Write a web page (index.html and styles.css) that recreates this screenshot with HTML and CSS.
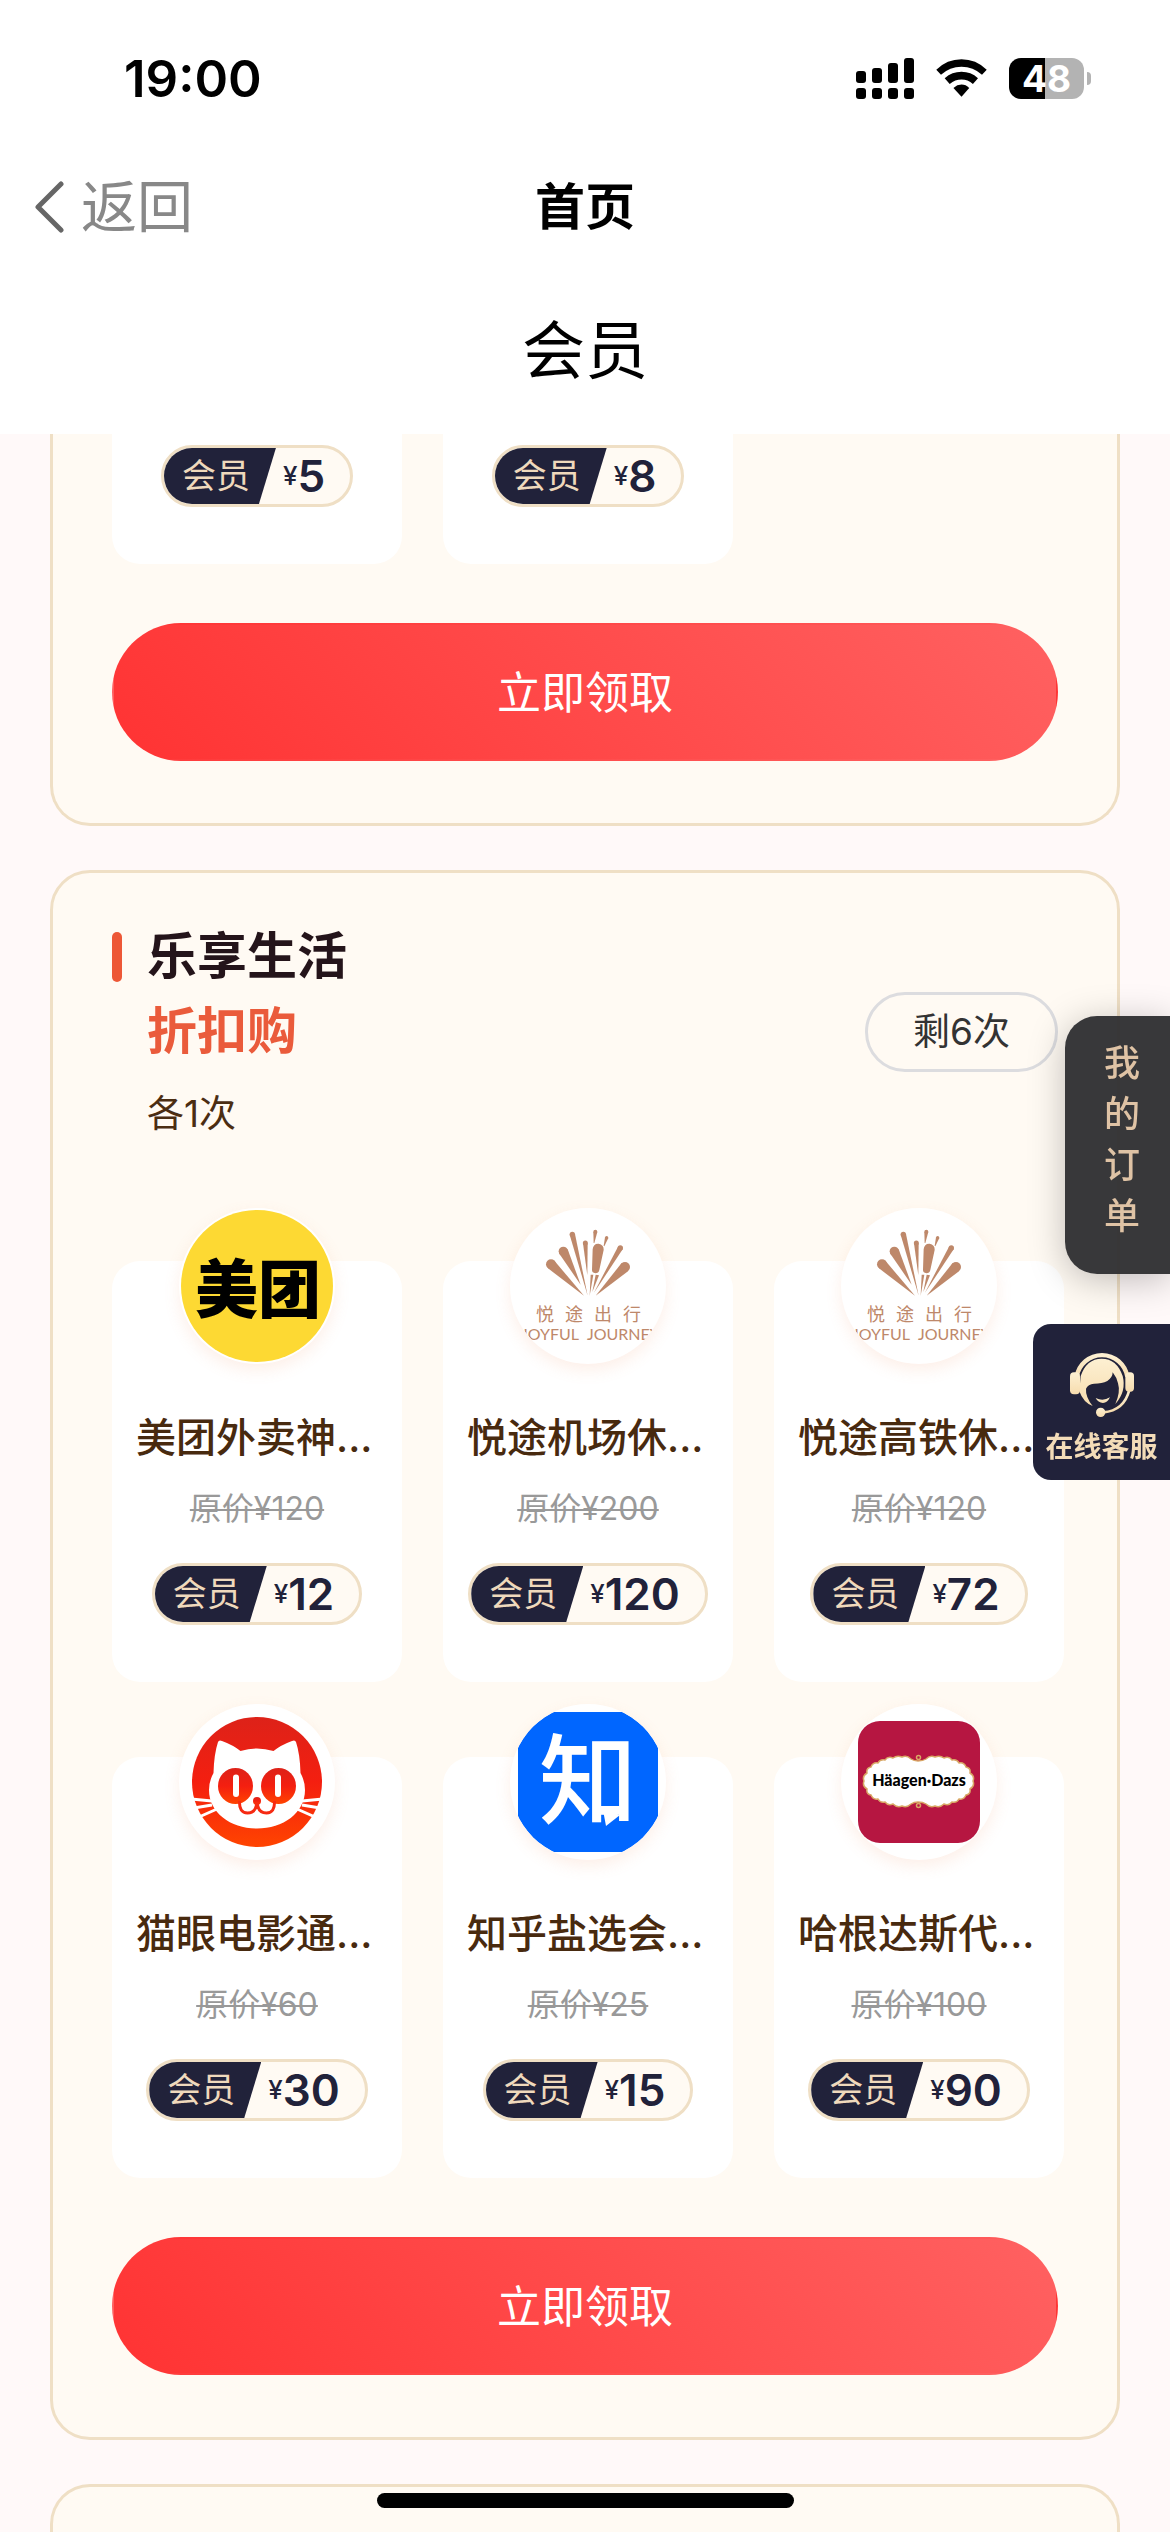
FILE: index.html
```html
<!DOCTYPE html>
<html lang="zh-CN">
<head>
<meta charset="utf-8">
<meta name="viewport" content="width=device-width, initial-scale=1">
<title>会员</title>
<link rel="stylesheet" href="styles.css">
</head>
<body>
<svg class="defs" aria-hidden="true">
  <defs>
    <clipPath id="disc"><circle cx="78" cy="78" r="78"/></clipPath>
    <linearGradient id="catRed" x1="0" y1="0" x2="0" y2="1">
      <stop offset="0" stop-color="#dd2219"/><stop offset=".5" stop-color="#f41f10"/><stop offset="1" stop-color="#ff4400"/>
    </linearGradient>
    <linearGradient id="cream" x1="0" y1="0" x2="0" y2="1">
      <stop offset="0" stop-color="#fdf0d2"/><stop offset="1" stop-color="#f6dcae"/>
    </linearGradient>
    <symbol id="joyful" viewBox="0 0 156 156">
      <g fill="#be886a" transform="scale(.3333) translate(-60 -54)">
        <circle cx="183" cy="223" r="15"/><path d="M174 235 L192 211 L282 317Z"/>
        <circle cx="220" cy="184" r="14"/><path d="M207 190 L233 178 L272 284Z"/>
        <circle cx="247" cy="133" r="8"/><path d="M239 134 L255 132 L293 317Z"/>
        <circle cx="286" cy="159" r="7.500"/><path d="M279 160 L293 160 L292 256Z"/>
        <path d="M308 178 Q310 160 326 161 Q342 164 341 180 L328 240 Q326 250 316 250 Q306 248 306 240Z"/>
        <circle cx="316" cy="125" r="6"/><path d="M310 126 L322 126 L313 159 L311 159Z"/>
        <circle cx="350" cy="143" r="5"/><path d="M345 142 L355 144 L343 169 L341 168Z"/>
        <circle cx="391" cy="174" r="8"/><path d="M384 170 L398 178 L312 308Z"/>
        <circle cx="405" cy="231" r="15"/><path d="M395 219 L414 244 L317 317Z"/>
        <path d="M302 254 L310 254 L299 317Z"/><path d="M317 254 L327 256 L307 306Z"/>
      </g>
      <g class="joy-name"><text x="26" y="113">悦</text><text x="55" y="113">途</text><text x="84" y="113">出</text><text x="113" y="113">行</text></g>
      <g class="joy-latin" clip-path="url(#disc)"><text x="11" y="132">JOYFUL</text><text x="77" y="132">JOURNEY</text></g>
    </symbol>
  </defs>
</svg>

<header class="header">
  <div class="status">
    <time class="clock">19:00</time>
    <div class="status-icons">
      <svg class="signal" viewBox="0 0 58 41" aria-hidden="true">
        <rect x="0" y="13" width="10" height="12" rx="3"/><rect x="16" y="10" width="10" height="15" rx="3"/><rect x="32" y="5" width="10" height="20" rx="3"/><rect x="48" y="0" width="10" height="25" rx="3"/>
        <rect x="0" y="30" width="10" height="11" rx="3"/><rect x="16" y="30" width="10" height="11" rx="3"/><rect x="32" y="30" width="10" height="11" rx="3"/><rect x="48" y="30" width="10" height="11" rx="3"/>
      </svg>
      <svg class="wifi" viewBox="290 56 150 113" aria-hidden="true">
        <path d="M290 88 Q322 57 365 57 Q408 57 440 88 L426 103 Q400 79 365 79 Q330 79 304 103Z"/>
        <path d="M315 113 Q337 94 365 94 Q393 94 414 113 L399 130 Q384 117 365 117 Q346 117 330 130Z"/>
        <path d="M341 142 Q352 132 365 132 Q378 132 388 142 L365 168Z"/>
      </svg>
      <div class="battery">48</div>
    </div>
  </div>
  <nav class="nav">
    <a class="back" href="#">
      <svg class="chevron" viewBox="0 0 29 52" aria-hidden="true"><path d="M26 3 L3 26 L26 49"/></svg>
      返回
    </a>
    <div class="nav-title">首页</div>
  </nav>
  <h1 class="page-title">会员</h1>
</header>

<main class="content">
  <section class="card card-scrolled">
    <ul class="grid">
      <li class="item"><div class="price"><span class="tag">会员</span><span class="yen">¥</span><b>5</b></div></li>
      <li class="item"><div class="price"><span class="tag">会员</span><span class="yen">¥</span><b>8</b></div></li>
    </ul>
    <button class="claim" type="button">立即领取</button>
  </section>

  <section class="card">
    <div class="card-head">
      <div class="heading">
        <h2>乐享生活</h2>
        <p class="accent">折扣购</p>
        <p class="note">各1次</p>
      </div>
      <span class="remain">剩6次</span>
    </div>
    <ul class="grid">
      <li class="item">
        <svg class="logo" viewBox="0 0 156 156" aria-hidden="true">
          <circle cx="78" cy="78" r="76" fill="#fdd933"/>
          <text class="meituan" x="79" y="104">美团</text>
        </svg>
        <h3>美团外卖神...</h3>
        <del>原价¥120</del>
        <div class="price"><span class="tag">会员</span><span class="yen">¥</span><b>12</b></div>
      </li>
      <li class="item">
        <svg class="logo" aria-hidden="true"><use href="#joyful"/></svg>
        <h3>悦途机场休...</h3>
        <del>原价¥200</del>
        <div class="price"><span class="tag">会员</span><span class="yen">¥</span><b>120</b></div>
      </li>
      <li class="item">
        <svg class="logo" aria-hidden="true"><use href="#joyful"/></svg>
        <h3>悦途高铁休...</h3>
        <del>原价¥120</del>
        <div class="price"><span class="tag">会员</span><span class="yen">¥</span><b>72</b></div>
      </li>
      <li class="item">
        <svg class="logo" viewBox="0 0 156 156" aria-hidden="true">
          <circle cx="78" cy="78" r="65" fill="url(#catRed)"/>
          <path fill="#fff" d="M34.500 69 Q35 50 39 38 Q40 35.500 43 37 Q54 41 61.500 47 Q78 42 94.500 47 Q102 41 113 37 Q116 35.500 117 38 Q121 50 121.500 69 Q126 77 126 86 C126 109 104 124.500 78 124.500 S30 109 30 86 Q30 77 34.500 69Z"/>
          <g fill="url(#catRed)"><ellipse cx="56.500" cy="82" rx="17.500" ry="18"/><ellipse cx="99.500" cy="82" rx="17.500" ry="18"/><circle cx="78" cy="97" r="4"/></g>
          <g fill="#fff"><rect x="54" y="70.500" width="6" height="22.500" rx="3"/><rect x="96" y="70.500" width="6" height="22.500" rx="3"/></g>
          <path fill="none" stroke="#f62a12" stroke-width="3" d="M60.500 97 Q60 109 68.500 109 Q75 109 77 103 L78 98 L79 103 Q81 109 87.500 109 Q96 109 95.500 97"/>
          <path stroke="#fff" stroke-width="3" d="M12 95 L33 97 M15 104 L33 101 M20 113 L38 105 M144 95 L123 97 M141 104 L123 101 M136 113 L118 105"/>
        </svg>
        <h3>猫眼电影通...</h3>
        <del>原价¥60</del>
        <div class="price"><span class="tag">会员</span><span class="yen">¥</span><b>30</b></div>
      </li>
      <li class="item">
        <svg class="logo" viewBox="0 0 156 156" aria-hidden="true">
          <rect x="8" y="8" width="140" height="140" fill="#0066ff" clip-path="url(#disc)"/>
          <text class="zhihu" x="78" y="112">知</text>
          <path fill="#fff" d="M93 106 L96 122 L110 111Z"/>
        </svg>
        <h3>知乎盐选会...</h3>
        <del>原价¥25</del>
        <div class="price"><span class="tag">会员</span><span class="yen">¥</span><b>15</b></div>
      </li>
      <li class="item">
        <svg class="logo" viewBox="0 0 156 156" aria-hidden="true">
          <rect x="17" y="17" width="122" height="122" rx="22" fill="#b61641"/>
          <path fill="#fff" stroke="#d8a765" stroke-width="1.500" d="M77 57 Q73 57 70 55 Q66 51 61 53 Q56 51 52 54 Q47 52 44 56 Q39 55 37 59 Q32 58 30 63 Q25 64 26 69 Q21 72 23 77 Q21 82 26 85 Q25 90 30 91 Q32 96 37 95 Q39 99 44 98 Q47 102 52 100 Q56 104 61 102 Q66 104 70 100 Q73 98 77 98 Q82 98 85 100 Q89 104 94 102 Q99 104 103 100 Q108 102 111 98 Q116 99 118 95 Q123 96 125 91 Q130 90 129 85 Q134 82 132 77 Q134 72 129 69 Q130 64 125 63 Q123 58 118 59 Q116 55 111 56 Q108 52 103 54 Q99 51 94 53 Q89 51 85 55 Q82 57 77 57Z"/>
          <g fill="none" stroke="#d8a765" stroke-width="1.500"><circle cx="77.500" cy="53.500" r="2"/><circle cx="77.500" cy="101.500" r="2"/></g>
          <text class="haagen" x="78" y="82">Häagen·Dazs</text>
        </svg>
        <h3>哈根达斯代...</h3>
        <del>原价¥100</del>
        <div class="price"><span class="tag">会员</span><span class="yen">¥</span><b>90</b></div>
      </li>
    </ul>
    <button class="claim" type="button">立即领取</button>
  </section>

  <section class="card card-next"></section>
</main>

<a class="orders" href="#">我的订单</a>
<a class="service" href="#">
  <svg viewBox="986 510 196 204" aria-hidden="true">
    <g fill="none" stroke="url(#cream)">
      <path stroke-width="13" d="M1008 590 A77 77 0 0 1 1160 590"/>
      <path stroke-width="8" d="M1166 630 Q1150 692 1088 697"/>
    </g>
    <g fill="url(#cream)">
      <path d="M1020 588 Q1038 536 1083 536 Q1128 536 1146 588 Q1158 634 1124 672 Q1140 636 1132 610 Q1128 592 1116 577 Q1116 592 1100 603 Q1084 611 1060 611 Q1042 613 1036 626 Q1034 650 1056 678 Q1028 668 1016 634Z"/>
      <rect x="988" y="577" width="30" height="66" rx="12"/>
      <rect x="1154" y="577" width="26" height="58" rx="11"/>
      <circle cx="1080" cy="697" r="14"/>
      <path d="M1065 654 Q1087 665 1108 652 Q1100 669 1087 669 Q1072 668 1065 654Z"/>
    </g>
  </svg>
  在线客服
</a>
<div class="home-bar"></div>
</body>
</html>
```
FILE: styles.css
```css
* {
  box-sizing: border-box;
  margin: 0;
  padding: 0;
}

body {
  display: flex;
  flex-direction: column;
  height: 100vh;
  overflow: hidden;
  background: #fff9f9;
  color: #000;
  font-family: Inter, "Noto Sans CJK SC", sans-serif;
}

a {
  color: inherit;
  text-decoration: none;
}

ul {
  list-style: none;
}

.defs {
  position: absolute;
  width: 0;
  height: 0;
}

/* header */
.header {
  flex: none;
  background: #fff;
}

.status {
  display: flex;
  align-items: center;
  justify-content: space-between;
  height: 156px;
  padding: 0 86px 0 124px;
}

.clock {
  font-size: 51px;
  font-weight: 600;
}

.status-icons {
  display: flex;
  align-items: center;
  gap: 22px;
}

.signal {
  width: 58px;
  height: 41px;
}

.wifi {
  width: 51px;
  height: 38px;
}

.battery {
  position: relative;
  width: 75px;
  height: 41px;
  border-radius: 12px;
  background: linear-gradient(90deg, #000 48%, #b3b3b3 48%);
  color: #fff;
  font-size: 37px;
  font-weight: 700;
  line-height: 41px;
  text-align: center;
}

.battery::after {
  content: "";
  position: absolute;
  top: 14px;
  right: -7px;
  width: 4px;
  height: 13px;
  border-radius: 0 4px 4px 0;
  background: #b3b3b3;
}

.nav {
  display: grid;
  grid-template-columns: 1fr auto 1fr;
  align-items: center;
  height: 102px;
  padding: 0 35px;
}

.back {
  display: flex;
  align-items: center;
  gap: 17px;
  color: #888;
  font-size: 56px;
  font-weight: 400;
  line-height: 80px;
}

.chevron {
  width: 29px;
  height: 52px;
  fill: none;
  stroke: #666;
  stroke-width: 5;
  stroke-linecap: round;
  stroke-linejoin: round;
}

.nav-title {
  font-size: 50px;
  font-weight: 600;
  line-height: 80px;
}

.page-title {
  padding: 12px 0 4px;
  font-size: 63px;
  font-weight: 400;
  line-height: 160px;
  text-align: center;
}

/* cards */
.content {
  display: flex;
  flex: 1;
  flex-direction: column;
  gap: 44px;
  overflow: hidden;
  padding: 0 50px;
}

.card {
  flex: none;
  padding: 46px 59px 62px;
  border: 3px solid #efdfc5;
  border-radius: 40px;
  background: #fffaf3;
}

.card-scrolled {
  padding-top: 0;
  border-top: 0;
  border-radius: 0 0 40px 40px;
}

.card-next {
  flex: 1;
  padding: 0;
  border-bottom: 0;
  border-radius: 40px 40px 0 0;
}

.card-head {
  display: flex;
  align-items: center;
  justify-content: space-between;
  margin-bottom: 117px;
}

.heading {
  padding-left: 35px;
}

.heading h2,
.accent {
  font-size: 50px;
  font-weight: 600;
  line-height: 75px;
}

.heading h2 {
  display: flex;
  align-items: center;
  gap: 25px;
  margin-left: -35px;
  color: #24141a;
}

.heading h2::before {
  content: "";
  width: 10px;
  height: 50px;
  border-radius: 5px;
  background: #ed5736;
}

.accent {
  color: #ea5b3b;
}

.note {
  margin-top: 15px;
  color: #4b2d12;
  font-size: 37px;
  line-height: 60px;
}

.remain {
  padding: 0 45px;
  border: 3px solid #dcdcdf;
  border-radius: 40px;
  color: #333;
  font-size: 37px;
  line-height: 74px;
}

.grid {
  display: grid;
  grid-template-columns: repeat(3, 1fr);
  gap: 75px 41px;
  margin-right: -6px;
}

.item {
  display: flex;
  flex-direction: column;
  align-items: center;
  padding-bottom: 57px;
  border-radius: 28px;
  background: #fff;
}

.card-scrolled .item {
  padding-top: 11px;
  border-radius: 0 0 28px 28px;
}

.logo {
  width: 156px;
  height: 156px;
  margin-top: -53px;
  border-radius: 50%;
  background: #fff;
  box-shadow: 0 6px 16px rgba(240, 140, 90, 0.14);
}

.item h3 {
  width: 242px;
  margin-top: 44px;
  color: #482a0f;
  font-size: 40px;
  font-weight: 500;
  line-height: 60px;
  white-space: nowrap;
}

.item del {
  margin-top: 21px;
  color: #999;
  font-size: 32px;
  line-height: 40px;
  text-decoration-thickness: 2px;
}

.item del + .price {
  margin-top: 34px;
}

.price {
  display: flex;
  align-items: center;
  height: 62px;
  padding-right: 25px;
  overflow: hidden;
  border: 3px solid #efdfc5;
  border-radius: 31px;
  background: #fffaf3;
  color: #21223a;
  line-height: 56px;
}

.tag {
  margin-right: 7px;
  padding: 0 26px 0 18px;
  background: #21223a;
  clip-path: polygon(0 0, 100% 0, calc(100% - 17px) 100%, 0 100%);
  color: #efd9bc;
  font-size: 34px;
  font-weight: 400;
}

.yen {
  font-size: 26px;
  font-weight: 500;
}

.price b {
  font-size: 44px;
  font-weight: 600;
}

.claim {
  display: block;
  width: 100%;
  height: 138px;
  margin-top: 59px;
  padding-bottom: 4px;
  border: 2px solid transparent;
  border-radius: 69px;
  background: linear-gradient(45deg, #ff3333, #ff6161);
  color: #fff;
  font-family: inherit;
  font-size: 44px;
  font-weight: 400;
}

/* logo lettering */
.joy-name {
  fill: #be886a;
  font-size: 18px;
}

.joy-latin {
  fill: #be886a;
  font-family: Lato, sans-serif;
  font-size: 16px;
  font-weight: 400;
}

.meituan {
  font-size: 63px;
  font-weight: 900;
  text-anchor: middle;
}

.zhihu {
  fill: #fff;
  font-size: 98px;
  font-weight: 500;
  text-anchor: middle;
}

.haagen {
  font-family: Lato, sans-serif;
  font-size: 16px;
  font-weight: 900;
  text-anchor: middle;
}

/* floating controls */
.orders {
  position: fixed;
  top: 1016px;
  right: 0;
  width: 105px;
  padding: 22px 30px 32px 39px;
  border-radius: 32px 0 0 32px;
  background: rgba(50, 50, 52, 0.97);
  box-shadow: 0 6px 36px rgba(0, 0, 0, 0.25);
  color: #dfc3a5;
  font-size: 36px;
  font-weight: 500;
  line-height: 51px;
}

.service {
  position: fixed;
  top: 1324px;
  right: 0;
  display: flex;
  flex-direction: column;
  align-items: center;
  gap: 9px;
  width: 137px;
  height: 156px;
  padding: 26px 0 0;
  border-radius: 18px 0 0 18px;
  background: #21223a;
  color: #f3dcb8;
  font-size: 28px;
  font-weight: 600;
  line-height: 40px;
  white-space: nowrap;
}

.service svg {
  width: 66px;
  height: 68px;
}

.home-bar {
  position: fixed;
  bottom: 24px;
  left: 50%;
  width: 417px;
  height: 15px;
  margin-left: -208px;
  border-radius: 8px;
  background: #000;
}
```
